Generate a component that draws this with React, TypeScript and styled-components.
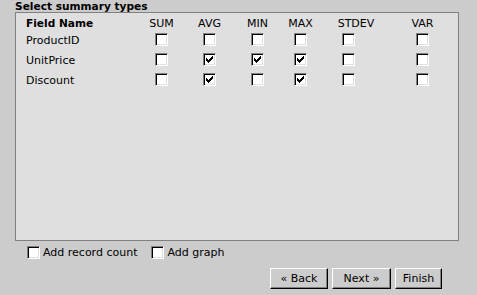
import React from 'react';
import styled, { createGlobalStyle } from 'styled-components';

const Global = createGlobalStyle`
  html, body { margin: 0; padding: 0; background: #cccccc; }
  body { font-family: "DejaVu Sans", "Liberation Sans", sans-serif; font-size: 11px; color: #000; }
`;

const Page = styled.div`
  width: 477px;
  height: 295px;
  display: flex;
  flex-direction: column;
`;

const Title = styled.div`
  font-weight: bold;
  font-size: 10.6px;
  line-height: 12px;
  height: 12px;
  padding-left: 15px;
  white-space: nowrap;
`;

const Panel = styled.div`
  margin-left: 15px;
  width: 444px;
  height: 229px;
  box-sizing: border-box;
  border: 1px solid #808080;
  background: #dfdfdf;
  padding: 1px 0 0 10px;
`;

const Grid = styled.div<{ $cols: string }>`
  display: grid;
  grid-template-columns: ${(p) => p.$cols};
  grid-template-rows: 16px;
  grid-auto-rows: 20px;
  align-items: center;
`;

const HeadCell = styled.div<{ $bold?: boolean; $left?: boolean }>`
  align-self: end;
  line-height: 13px;
  font-weight: ${(p) => (p.$bold ? 'bold' : 'normal')};
  font-size: ${(p) => (p.$bold ? '10.6px' : '11px')};
  text-align: ${(p) => (p.$left ? 'left' : 'center')};
  white-space: nowrap;
`;

const NameCell = styled.div`
  white-space: nowrap;
`;

const BoxCell = styled.div<{ $inset?: number }>`
  display: flex;
  justify-content: ${(p) => (p.$inset !== undefined ? 'flex-start' : 'center')};
  padding-left: ${(p) => (p.$inset !== undefined ? `${p.$inset}px` : '0')};
  padding-bottom: 2px;
`;

const Box = styled.span`
  width: 13px;
  height: 13px;
  box-sizing: border-box;
  border: 1px solid;
  border-color: #808080 #ffffff #ffffff #808080;
  box-shadow: inset 1px 1px #000000, inset -1px -1px #dfdfdf;
  background: #ffffff;
  display: inline-flex;
  align-items: center;
  justify-content: center;
  flex: none;
`;

const Check = () => (
  <svg width="7" height="7" viewBox="0 0 7 7" shapeRendering="crispEdges">
    <path
      d="M0 2h1v3H0zM1 3h1v3H1zM2 4h1v3H2zM3 3h1v3H3zM4 2h1v3H4zM5 1h1v3H5zM6 0h1v3H6z"
      fill="#000"
    />
  </svg>
);

const CheckBox = ({ checked }: { checked?: boolean }) => <Box>{checked ? <Check /> : null}</Box>;

const Options = styled.div`
  display: flex;
  align-items: center;
  margin-top: 5px;
  padding-left: 27px;
  height: 13px;
`;

const OptionLabel = styled.label`
  display: flex;
  align-items: center;
  gap: 3px;
  margin-right: 14px;
  white-space: nowrap;
  line-height: 13px;
`;

const ButtonRow = styled.div`
  display: flex;
  justify-content: flex-end;
  gap: 4px;
  padding-right: 35px;
  margin-top: 9px;
`;

const Button = styled.button<{ $w: number }>`
  width: ${(p) => p.$w}px;
  height: 21px;
  box-sizing: border-box;
  padding: 0;
  border: 1px solid;
  border-color: #ffffff #000000 #000000 #ffffff;
  box-shadow: inset -1px -1px #808080;
  background: #cccccc;
  font-family: "DejaVu Sans", "Liberation Sans", sans-serif;
  font-size: 11px;
  color: #000;
`;

type Col = { label: string; width: number; inset?: number };

const cols: Col[] = [
  { label: 'SUM', width: 39 },
  { label: 'AVG', width: 57 },
  { label: 'MIN', width: 39 },
  { label: 'MAX', width: 47 },
  { label: 'STDEV', width: 64, inset: 18 },
  { label: 'VAR', width: 69 },
];

const rows: { name: string; checked: string[] }[] = [
  { name: 'ProductID', checked: [] },
  { name: 'UnitPrice', checked: ['AVG', 'MIN', 'MAX'] },
  { name: 'Discount', checked: ['AVG', 'MAX'] },
];

export default function App() {
  const template = ['116px', ...cols.map((c) => `${c.width}px`)].join(' ');
  return (
    <>
      <Global />
      <Page>
        <Title>Select summary types</Title>
        <Panel>
          <Grid $cols={template}>
            <HeadCell $bold $left>Field Name</HeadCell>
            {cols.map((c) => (
              <HeadCell key={c.label}>{c.label}</HeadCell>
            ))}
            {rows.map((r) => (
              <React.Fragment key={r.name}>
                <NameCell>{r.name}</NameCell>
                {cols.map((c) => (
                  <BoxCell key={c.label} $inset={c.inset}>
                    <CheckBox checked={r.checked.includes(c.label)} />
                  </BoxCell>
                ))}
              </React.Fragment>
            ))}
          </Grid>
        </Panel>
        <Options>
          <OptionLabel>
            <CheckBox />
            Add record count
          </OptionLabel>
          <OptionLabel>
            <CheckBox />
            Add graph
          </OptionLabel>
        </Options>
        <ButtonRow>
          <Button $w={58}>« Back</Button>
          <Button $w={59}>Next »</Button>
          <Button $w={47}>Finish</Button>
        </ButtonRow>
      </Page>
    </>
  );
}
